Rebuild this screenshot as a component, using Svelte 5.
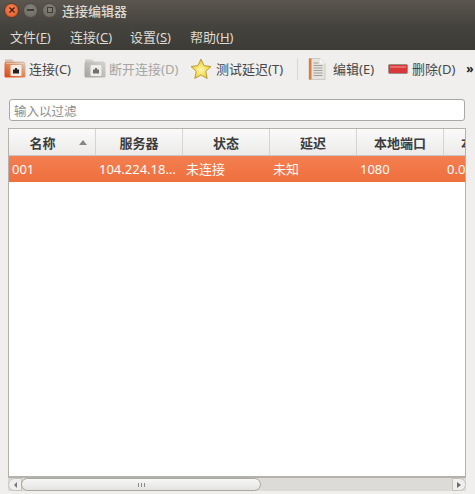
<script>
  const menus = [
    ['文件(', 'F', ')'],
    ['连接(', 'C', ')'],
    ['设置(', 'S', ')'],
    ['帮助(', 'H', ')']
  ];
  const columns = ['名称', '服务器', '状态', '延迟', '本地端口', '本地地址'];
  const cells = ['001', '104.224.18…', '未连接', '未知', '1080', '0.0.0.0'];
</script>

<div class="window">
  <header class="titlebar">
    <div class="controls">
      <span class="ctl close">
        <svg viewBox="0 0 8 8" width="8" height="8"><path d="M1.5 1.5l5 5M6.5 1.5l-5 5" stroke="#4a1a08" stroke-width="1.4" fill="none"/></svg>
      </span>
      <span class="ctl"><i class="minus"></i></span>
      <span class="ctl"><i class="square"></i></span>
    </div>
    <span class="title">连接编辑器</span>
  </header>

  <nav class="menubar">
    {#each menus as m}
      <span class="menu">{m[0]}<u>{m[1]}</u>{m[2]}</span>
    {/each}
  </nav>

  <div class="toolbar">
    <div class="tool first">
      <svg class="icon" viewBox="0 0 22 20" width="22" height="20">
        <defs>
          <linearGradient id="fo" x1="0" y1="1" x2="1" y2="0"><stop offset="0" stop-color="#dc4312"/><stop offset=".55" stop-color="#e08a5c"/><stop offset="1" stop-color="#d9cfc6"/></linearGradient>
        </defs>
        <path d="M1 0.500h7l2 2h10v3H1z" fill="#d3bfae"/>
        <rect x="0.500" y="3" width="21" height="15.500" rx="1.500" fill="url(#fo)"/>
        <rect x="2" y="4" width="18" height="1" fill="#f0d8c8" opacity=".6"/>
        <rect x="6.500" y="6" width="11" height="11" rx="1" fill="#f3ece6"/>
        <path d="M9 14.500v-4h2v-1.500h2v1.500h2v4z" fill="#26221f"/>
      </svg>
      <span>连接(C)</span>
    </div>
    <div class="tool off two">
      <svg class="icon" viewBox="0 0 22 20" width="22" height="20">
        <defs>
          <linearGradient id="fg" x1="0" y1="1" x2="1" y2="0"><stop offset="0" stop-color="#a3a29f"/><stop offset="1" stop-color="#d6d4d0"/></linearGradient>
        </defs>
        <path d="M1 0.500h7l2 2h10v3H1z" fill="#cfcdc9"/>
        <rect x="0.500" y="3" width="21" height="15.500" rx="1.500" fill="url(#fg)"/>
        <rect x="6.500" y="6" width="11" height="11" rx="1" fill="#eeedea"/>
        <path d="M9 14.500v-4h2v-1.500h2v1.500h2v4z" fill="#70706d"/>
      </svg>
      <span>断开连接(D)</span>
    </div>
    <div class="tool three">
      <svg class="icon star" viewBox="0 0 22 22" width="22" height="22">
        <defs>
          <radialGradient id="st" cx=".5" cy=".55" r=".55"><stop offset="0" stop-color="#fdf6b0"/><stop offset=".6" stop-color="#f3dc55"/><stop offset="1" stop-color="#d8b420"/></radialGradient>
        </defs>
        <path d="M11 1l3 6.600 7 .9-5.200 4.800 1.400 7.200L11 17l-6.200 3.500 1.400-7.200L1 8.500l7-.9z" fill="url(#st)" stroke="#b39a2c" stroke-width=".9" stroke-linejoin="round"/>
      </svg>
      <span>测试延迟(T)</span>
    </div>
    <div class="sep"></div>
    <div class="tool four">
      <svg class="icon" viewBox="0 0 18 22" width="18" height="22">
        <path d="M1 .5h11l5 5v16H1z" fill="#e6e4e0" stroke="#c4c2be" stroke-width=".8"/>
        <rect x="1" y=".5" width="2.500" height="21" fill="#e57b33"/>
        <path d="M12 .5v5h5z" fill="#f6f5f3"/>
        <path d="M5.500 5h5M5.500 7.500h9M5.500 10h9M5.500 12.500h9M5.500 15h9M5.500 17.500h9" stroke="#a09e9a" stroke-width="1.100"/>
      </svg>
      <span>编辑(E)</span>
    </div>
    <div class="tool five">
      <svg class="icon" viewBox="0 0 20 10" width="20" height="10">
        <rect x="0.500" y="0.500" width="19" height="9" rx="1" fill="#d8383a" stroke="#9c8f8c"/>
        <rect x="2" y="2" width="16" height="2" fill="#e66a68"/>
      </svg>
      <span>删除(D)</span>
    </div>
    <span class="more">»</span>
  </div>

  <div class="filter"><span>输入以过滤</span></div>

  <div class="table">
    <div class="head">
      {#each columns as c, i}
        <div class="th">
          <span>{c}</span>
          {#if i === 0}<i class="sort"></i>{/if}
        </div>
      {/each}
    </div>
    <div class="row">
      {#each cells as c}
        <div class="td">{c}</div>
      {/each}
    </div>
  </div>

  <div class="scrollbar">
    <span class="arrow left"><i></i></span>
    <div class="thumb"><span class="grip"></span></div>
    <span class="arrow right"><i></i></span>
  </div>
</div>

<style>
  :global(body) {
    margin: 0;
    background: #f0efed;
  }
  .window {
    width: 475px;
    height: 494px;
    overflow: hidden;
    display: flex;
    flex-direction: column;
    font-family: "Noto Sans", "Noto Sans CJK SC", sans-serif;
    font-size: 13px;
    color: #3c3c3c;
    background: #f0efed;
  }
  .titlebar {
    height: 23px;
    display: flex;
    align-items: center;
    background: linear-gradient(#5b574f, #46443e);
    color: #dcd8d0;
    flex-shrink: 0;
  }
  .controls {
    display: flex;
    gap: 3px;
    padding-left: 4px;
    padding-bottom: 3px;
    width: 58px;
    box-sizing: border-box;
    flex-shrink: 0;
  }
  .ctl {
    width: 13px;
    height: 13px;
    border-radius: 50%;
    background: radial-gradient(circle at 50% 35%, #85827a, #6a675f);
    border: 0.5px solid #4d4b45;
    display: flex;
    align-items: center;
    justify-content: center;
    flex-shrink: 0;
    margin-right: 1px;
  }
  .ctl.close {
    background: radial-gradient(circle at 50% 40%, #f58a5a, #e0501f);
    border-color: #5a3a2c;
  }
  .minus {
    width: 7px;
    height: 2px;
    background: #3e3c37;
  }
  .square {
    width: 4px;
    height: 4px;
    border: 1.500px solid #3e3c37;
  }
  .title {
    margin-left: 4px;
    font-size: 13px;
    line-height: 1;
    font-weight: 500;
  }
  .menubar {
    height: 27px;
    display: flex;
    align-items: center;
    padding-left: 10px;
    gap: 10px;
    background: linear-gradient(#46443e, #3c3b36);
    color: #dedbd4;
    flex-shrink: 0;
  }
  .menu {
    width: 50px;
    font-size: 13px;
    white-space: nowrap;
  }
  .toolbar {
    height: 38px;
    display: flex;
    align-items: center;
    padding-bottom: 1px;
    box-sizing: border-box;
    flex-shrink: 0;
    color: #474747;
  }
  .tool {
    display: flex;
    align-items: center;
    gap: 3px;
    white-space: nowrap;
    font-size: 13px;
    flex-shrink: 0;
  }
  .first { margin-left: 4px; width: 80px; }
  .two { width: 107px; }
  .three { width: 106px; margin-left: -1px; }
  .three span { margin-left: 1px; }
  .four { margin-left: 10px; width: 80px; gap: 7px; }
  .five { gap: 4px; }
  .off { color: #a6a5a2; }
  .sep {
    width: 1px;
    height: 22px;
    background: #d8d6d2;
    margin-left: 1px;
  }
  .more {
    margin-left: 11px;
    color: #222;
    font-weight: 700;
    font-size: 12px;
  }
  .filter {
    margin: 11px 10px 0 9px;
    height: 22px;
    border: 1px solid #aaa8a2;
    border-radius: 3px;
    background: #fff;
    box-sizing: border-box;
    display: flex;
    align-items: center;
    padding-left: 4px;
    color: #8e8e8c;
    font-size: 12.500px;
    flex-shrink: 0;
  }
  .table {
    margin: 7px 9px 0 8px;
    height: 349px;
    border: 1px solid #b5b2ac;
    box-sizing: border-box;
    background: #fff;
    overflow: hidden;
    flex-shrink: 0;
  }
  .head {
    display: flex;
    height: 27px;
    background: linear-gradient(#fafafa, #ecebe9);
    border-bottom: 1px solid #c8c6c2;
    box-sizing: border-box;
  }
  .th {
    flex: 0 0 87px;
    box-sizing: border-box;
    border-right: 1px solid #d6d4d0;
    position: relative;
    display: flex;
    align-items: center;
    justify-content: center;
    font-weight: 700;
    font-size: 13px;
    color: #3c3c3c;
    white-space: nowrap;
    overflow: hidden;
  }
  .th:first-child span {
    margin-right: 19px;
  }
  .sort {
    position: absolute;
    right: 8px;
    top: 11px;
    width: 0;
    height: 0;
    border-left: 4px solid transparent;
    border-right: 4px solid transparent;
    border-bottom: 5px solid #88867f;
  }
  .row {
    display: flex;
    height: 26px;
    background: linear-gradient(#f47f50, #ee6f3e);
    color: #fff;
    align-items: center;
    font-size: 13px;
  }
  .td {
    flex: 0 0 87px;
    box-sizing: border-box;
    padding-left: 3px;
    white-space: nowrap;
    overflow: hidden;
    line-height: 18px;
  }
  .scrollbar {
    margin: 0 9px 0 8px;
    height: 14px;
    border-top: 1px solid #b5b2ac;
    box-sizing: border-box;
    display: flex;
    background: #dddbd7;
    flex-shrink: 0;
  }
  .arrow {
    width: 14px;
    background: #f0efed;
    display: flex;
    align-items: center;
    justify-content: center;
    flex-shrink: 0;
    border: 1px solid #c4c2bd;
    box-sizing: border-box;
  }
  .arrow.left {
    border-radius: 7px 0 0 7px;
  }
  .arrow.right {
    border-radius: 0 7px 7px 0;
    margin-left: auto;
  }
  .arrow.left i {
    border-top: 3px solid transparent;
    border-bottom: 3px solid transparent;
    border-right: 3px solid #777;
  }
  .arrow.right i {
    border-top: 3.500px solid transparent;
    border-bottom: 3.500px solid transparent;
    border-left: 4px solid #6a6a6a;
  }
  .thumb {
    width: 240px;
    background: linear-gradient(#f8f8f7, #e4e3e0);
    border: 1px solid #aaa8a3;
    border-radius: 7px;
    box-sizing: border-box;
    display: flex;
    align-items: center;
    justify-content: center;
    margin-left: -1px;
  }
  .grip {
    width: 7px;
    height: 4px;
    background: repeating-linear-gradient(90deg, #8a8a88 0 1px, transparent 1px 3px);
  }
</style>
